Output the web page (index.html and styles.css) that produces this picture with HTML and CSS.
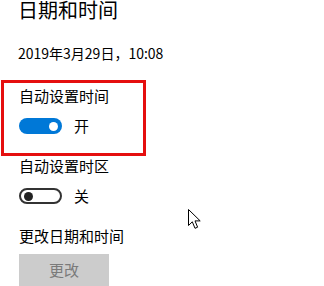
FILE: index.html
```html
<!DOCTYPE html>
<html lang="zh-CN">
<head>
<meta charset="utf-8">
<link rel="stylesheet" href="styles.css">
</head>
<body>
<main class="page">
  <h1 class="title">日期和时间</h1>
  <p class="date">2019年3月29日，10:08</p>

  <section class="group group-first">
    <div class="highlight"></div>
    <div class="label">自动设置时间</div>
    <div class="toggle-row">
      <span class="toggle toggle-on"><span class="knob"></span></span>
      <span class="state">开</span>
    </div>
  </section>

  <section class="group">
    <div class="label">自动设置时区</div>
    <div class="toggle-row">
      <span class="toggle toggle-off"><span class="knob"></span></span>
      <span class="state">关</span>
    </div>
  </section>

  <section class="group">
    <div class="label">更改日期和时间</div>
    <button class="btn" disabled>更改</button>
  </section>

  <svg class="cursor" width="14" height="21" viewBox="0 0 14 21">
    <path d="M0.5 0.5 L0.5 16.5 L4.3 12.8 L7 19.3 L9.6 18.2 L7 11.9 L12.2 11.9 Z" fill="#fff" stroke="#000" stroke-width="1" stroke-linejoin="miter"/>
  </svg>
</main>
</body>
</html>
```

FILE: styles.css
```css
html, body {
  margin: 0;
  padding: 0;
  background: #fff;
}

body {
  font-family: "Noto Sans CJK SC", "Noto Sans", sans-serif;
  color: #000;
  width: 324px;
  height: 286px;
  overflow: hidden;
}

.page {
  position: relative;
  padding-left: 19px;
  height: 286px;
}

.title {
  margin: 0;
  font-size: 20px;
  line-height: 20px;
  font-weight: 400;
  padding-left: 0;
  margin-left: -1px;
}

.date {
  margin: 23px 0 0 -1px;
  font-size: 14px;
  line-height: 20px;
}

.group {
  position: relative;
  margin-top: 20px;
}

.group-first {
  margin-top: 23px;
}

.highlight {
  position: absolute;
  left: -18px;
  top: -6px;
  width: 139px;
  height: 70px;
  border: 3px solid #e50f0f;
}

.label {
  font-size: 15px;
  line-height: 20px;
}

.toggle-row {
  display: flex;
  align-items: center;
  height: 20px;
  margin-top: 10px;
}

.toggle {
  position: relative;
  box-sizing: border-box;
  width: 43px;
  height: 16px;
  border-radius: 8px;
  display: flex;
  align-items: center;
}

.toggle-on {
  background: #0078d7;
  justify-content: flex-end;
  padding-right: 4px;
}

.toggle-on .knob {
  background: #fff;
}

.toggle-off {
  border: 2px solid #333;
  justify-content: flex-start;
  padding-left: 3px;
}

.toggle-off .knob {
  background: #222;
}

.knob {
  width: 9px;
  height: 9px;
  border-radius: 50%;
}

.state {
  margin-left: 12px;
  font-size: 15px;
  line-height: 20px;
}

.btn {
  display: block;
  margin-top: 8px;
  width: 90px;
  height: 32px;
  border: none;
  background: #cccccc;
  color: #7a7a7a;
  font-family: "Noto Sans CJK SC", sans-serif;
  font-size: 15px;
  line-height: 20px;
  padding: 0;
}

.cursor {
  position: absolute;
  left: 188px;
  top: 209px;
}
```
